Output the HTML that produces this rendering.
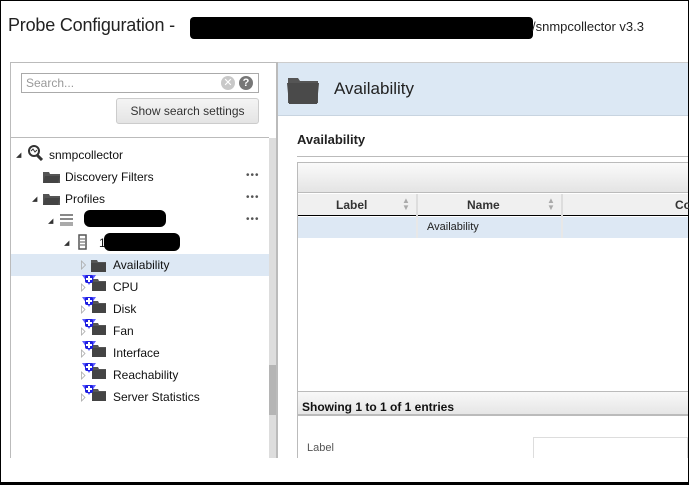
<!DOCTYPE html>
<html><head><style>
*{margin:0;padding:0;box-sizing:border-box}
body{width:689px;height:485px;overflow:hidden;background:#fff;font-family:"Liberation Sans","DejaVu Sans",sans-serif;position:relative}
.a{position:absolute}
.t{font-size:12px;color:#111;white-space:nowrap}
.fold{position:absolute;width:17px;height:12px}
.dots{position:absolute;left:246px;font-size:10px;color:#555;letter-spacing:1px}
.tri{position:absolute;font-size:7px;color:#333}
.blk{position:absolute;background:#000;border-radius:6px}
</style></head><body>
<div class="a" style="left:0;top:0;width:689px;height:1px;background:#000"></div>
<div class="a" style="left:0;top:0;width:1px;height:485px;background:#000"></div>
<div class="a" style="left:688px;top:0;width:1px;height:485px;background:#000"></div>
<div class="a" style="left:0;top:482px;width:689px;height:3px;background:#000"></div>

<div class="a" style="left:8px;top:15px;font-size:18px;color:#222;letter-spacing:-0.2px">Probe Configuration - </div>
<div class="blk" style="left:190px;top:17px;width:343px;height:22px;border-radius:4px"></div>
<div class="a" style="left:532px;top:19px;font-size:13px;color:#222">/snmpcollector v3.3</div>

<!-- left panel -->
<div class="a" style="left:10px;top:62px;width:267px;height:396px;border:1px solid #bbb;border-bottom:none"></div>
<div class="a" style="left:21px;top:73px;width:238px;height:20px;border:1px solid #aaa;font-size:12px;color:#999;padding:2px 4px">Search...</div>
<div class="a" style="left:221px;top:76px;width:14px;height:14px;border-radius:50%;background:#c8c8c8;color:#fff;font-size:11px;text-align:center;line-height:14px">✕</div>
<div class="a" style="left:239px;top:76px;width:14px;height:14px;border-radius:50%;background:#777;color:#fff;font-size:11px;font-weight:bold;text-align:center;line-height:14px">?</div>
<div class="a" style="left:116px;top:98px;width:143px;height:26px;border:1px solid #ccc;border-radius:3px;background:linear-gradient(#f4f4f4,#e4e4e4);font-size:12px;color:#333;text-align:center;line-height:24px">Show search settings</div>
<div class="a" style="left:11px;top:137px;width:258px;height:1px;background:#bbb"></div>
<div class="a" style="left:269px;top:138px;width:7px;height:320px;background:#ddd"></div>
<div class="a" style="left:269px;top:365px;width:7px;height:50px;background:#b5b5b5"></div>

<!-- tree -->
<div class="tri" style="left:16px;top:151px">◢</div>
<svg class="a" style="left:27px;top:145px" width="18" height="16"><circle cx="7" cy="6" r="5" fill="#fff" stroke="#333" stroke-width="2"/><path d="M4 6l2-2 2 3 2-2" stroke="#333" fill="none"/><path d="M10 10l5 5" stroke="#333" stroke-width="3"/></svg>
<div class="a t" style="left:49px;top:148px">snmpcollector</div>

<svg class="fold" style="left:43px;top:171px"><path d="M0 1h6l1 2h10v9H0z" fill="#555"/><path d="M2 5h15l-2 7H0z" fill="#444"/></svg>
<div class="a t" style="left:65px;top:170px">Discovery Filters</div><div class="dots" style="top:170px">•••</div>
<div class="tri" style="left:32px;top:195px">◢</div>
<svg class="fold" style="left:43px;top:193px"><path d="M0 1h6l1 2h10v9H0z" fill="#555"/><path d="M2 5h15l-2 7H0z" fill="#444"/></svg>
<div class="a t" style="left:65px;top:192px">Profiles</div><div class="dots" style="top:192px">•••</div>
<div class="tri" style="left:48px;top:217px">◢</div>
<svg class="a" style="left:60px;top:213px" width="14" height="14"><rect x="0" y="1" width="13" height="2" fill="#888"/><rect x="0" y="5" width="13" height="2" fill="#888"/><rect x="0" y="9" width="13" height="4" fill="#aaa"/></svg>
<div class="blk" style="left:84px;top:210px;width:82px;height:17px"></div><div class="dots" style="top:214px">•••</div>
<div class="tri" style="left:64px;top:239px">◢</div>
<svg class="a" style="left:78px;top:234px" width="10" height="16"><rect x="1" y="1" width="7" height="14" fill="none" stroke="#555" stroke-width="1.5"/><path d="M2 5h5M2 8h5M2 11h5" stroke="#555"/></svg>
<div class="a t" style="left:99px;top:236px">1</div>
<div class="blk" style="left:104px;top:233px;width:76px;height:18px"></div>

<div class="a" style="left:11px;top:254px;width:258px;height:22px;background:#dde8f4"></div>
<svg class="a" style="left:80px;top:259px" width="30" height="14"><path d="M1.5 2l4 4-4 4z" fill="none" stroke="#aaa" stroke-width=".8"/><path d="M11 1h6l1 2h8v10H11z" fill="#555"/><path d="M11 4h15v9H11z" fill="#444"/></svg>
<div class="a t" style="left:113px;top:258px">Availability</div>

<svg class="a" style="left:80px;top:275px" width="30" height="140">
<defs><g id="pf"><path d="M12 4h6l1 2h7v10H12z" fill="#555"/><path d="M12 7h14v9H12z" fill="#444"/><path d="M1.5 9l3.5 3.5-3.5 3.5z" fill="none" stroke="#aaa" stroke-width=".8"/><path d="M2 0h14l-7 10z" fill="#5a5aff"/><rect x="5" y="0" width="8" height="8" rx="2" fill="#1e1ee0"/><path d="M9 1v6M6 4h6" stroke="#fff" stroke-width="2"/></g></defs>
<use href="#pf" y="0"/><use href="#pf" y="22"/><use href="#pf" y="44"/><use href="#pf" y="66"/><use href="#pf" y="88"/><use href="#pf" y="110"/>
</svg>
<div class="a t" style="left:113px;top:280px">CPU</div>
<div class="a t" style="left:113px;top:302px">Disk</div>
<div class="a t" style="left:113px;top:324px">Fan</div>
<div class="a t" style="left:113px;top:346px">Interface</div>
<div class="a t" style="left:113px;top:368px">Reachability</div>
<div class="a t" style="left:113px;top:390px">Server Statistics</div>

<!-- right panel -->
<div class="a" style="left:277px;top:62px;width:411px;height:396px;border-left:1px solid #bbb"></div>
<div class="a" style="left:278px;top:62px;width:410px;height:54px;background:#dce8f4;border-top:1px solid #ccc;border-bottom:1px solid #c8d4e0"></div>
<svg class="a" style="left:287px;top:76px" width="32" height="28"><path d="M1 2h10l2 3h18v22H1z" fill="#555"/><path d="M0 7h32l-2 21H2z" fill="#4a4a4a"/></svg>
<div class="a" style="left:334px;top:79px;font-size:17px;color:#222">Availability</div>
<div class="a" style="left:297px;top:132px;font-size:13px;font-weight:bold;color:#222">Availability</div>
<div class="a" style="left:297px;top:156px;width:391px;height:1px;background:#bbb"></div>
<div class="a" style="left:297px;top:162px;width:391px;height:254px;border:1px solid #bbb;border-right:none"></div>
<div class="a" style="left:298px;top:163px;width:390px;height:30px;background:linear-gradient(#fafafa,#e4e4e4);border-bottom:1px solid #bbb"></div>
<div class="a" style="left:298px;top:194px;width:390px;height:22px;background:#f0f0f0;border-bottom:1px solid #000"></div>
<div class="a" style="left:416px;top:194px;width:2px;height:44px;background:#ddd"></div>
<div class="a" style="left:561px;top:194px;width:2px;height:44px;background:#ddd"></div>
<div class="a" style="left:336px;top:198px;font-size:12px;font-weight:bold;color:#333">Label</div>
<div class="a" style="left:467px;top:198px;font-size:12px;font-weight:bold;color:#333">Name</div>
<div class="a" style="left:675px;top:198px;font-size:12px;font-weight:bold;color:#333">Co</div>
<div class="a" style="left:402px;top:197px;font-size:8px;color:#aaa;line-height:7px">▲<br>▼</div>
<div class="a" style="left:547px;top:197px;font-size:8px;color:#aaa;line-height:7px">▲<br>▼</div>
<div class="a" style="left:298px;top:217px;width:390px;height:21px;background:#dde8f4"></div>
<div class="a" style="left:416px;top:217px;width:2px;height:21px;background:#e8e8e8"></div>
<div class="a" style="left:561px;top:217px;width:2px;height:21px;background:#e8e8e8"></div>
<div class="a" style="left:427px;top:221px;font-size:11px;color:#222">Availability</div>
<div class="a" style="left:298px;top:391px;width:390px;height:25px;background:linear-gradient(#f8f8f8,#e6e6e6);border-top:1px solid #bbb;border-bottom:2px solid #bbb"></div>
<div class="a" style="left:302px;top:400px;font-size:12px;font-weight:bold;color:#111">Showing 1 to 1 of 1 entries</div>
<div class="a" style="left:297px;top:416px;width:1px;height:42px;background:#bbb"></div>
<div class="a" style="left:307px;top:442px;font-size:11px;color:#555">Label</div>
<div class="a" style="left:533px;top:437px;width:155px;height:21px;border:1px solid #ddd;border-bottom:none"></div>
</body></html>
